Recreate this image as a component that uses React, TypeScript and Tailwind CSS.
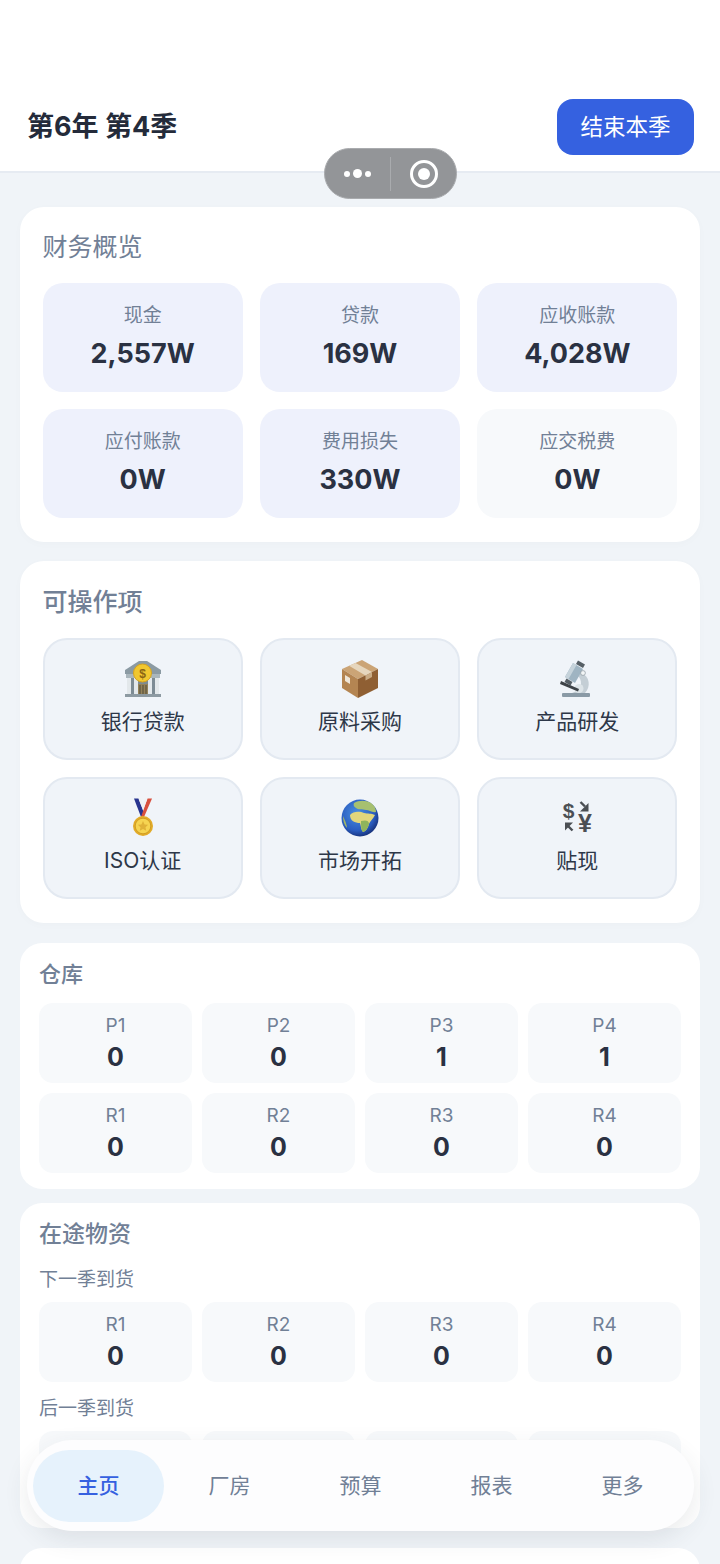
import React from 'react';

const FONT = 'font-["Inter","Noto_Sans_CJK_SC",sans-serif]';

const BankIcon = () => (
  <svg width="40" height="40" viewBox="0 0 40 40">
    <path d="M16 2 L24 2 L38 11 L38 15 L2 15 L2 11 Z" fill="#8b9aa3" />
    <rect x="3" y="15" width="34" height="4" fill="#aab6bc" />
    <rect x="4" y="19" width="4" height="16" fill="#e3e8eb" />
    <rect x="11" y="19" width="4" height="16" fill="#e3e8eb" />
    <rect x="25" y="19" width="4" height="16" fill="#e3e8eb" />
    <rect x="32" y="19" width="4" height="16" fill="#e3e8eb" />
    <rect x="8" y="19" width="3" height="16" fill="#7d8b94" />
    <rect x="15" y="19" width="10" height="16" fill="#7d8b94" />
    <rect x="29" y="19" width="3" height="16" fill="#7d8b94" />
    <rect x="15" y="25" width="10" height="10" fill="#94825a" />
    <path d="M17 26v9M20 26v9M23 26v9" stroke="#4f4a38" strokeWidth="1" />
    <rect x="2" y="35" width="36" height="3" fill="#8d9aa2" />
    <circle cx="19.5" cy="14" r="9" fill="#f1c72f" stroke="#d8a41c" strokeWidth="1" />
    <text x="19.5" y="18.5" textAnchor="middle" fontSize="12" fontWeight="700" fill="#8a6414" fontFamily="Liberation Sans">$</text>
  </svg>
);

const BoxIcon = () => (
  <svg width="40" height="40" viewBox="0 0 40 40">
    <path d="M2 10 L22 1 L38 10 L18 20 Z" fill="#cba476" />
    <path d="M2 10 L18 20 L18 39 L2 29 Z" fill="#b48552" />
    <path d="M18 20 L38 10 L38 29 L18 39 Z" fill="#8f5f33" />
    <path d="M9 6.8 L15.5 4 L32 13 L25.5 16.4 Z" fill="#e6d6bd" />
    <path d="M25.5 16.4 L32 13 L32 18 L25.5 21.4 Z" fill="#c9ab85" />
    <path d="M5 16 L10 19 L10 25 L5 22 Z" fill="#efe6d8" />
  </svg>
);

const MicroscopeIcon = () => (
  <svg width="40" height="40" viewBox="0 0 40 40">
    <rect x="5" y="34" width="28" height="4" rx="1" fill="#8a9aa6" />
    <path d="M24 14 C33 17 34 28 28 34 L15 34 C20 32 24 31 24 25 C24 21 23 19 21 17 Z" fill="#c4ced5" />
    <circle cx="22" cy="29.5" r="4.5" fill="#dde4e8" />
    <path d="M4 22 L22 30 L21 32.5 L3 25 Z" fill="#3e4348" />
    <path d="M16 4 L26 10 L18 24 L8 18 Z" fill="#9fb4c2" />
    <path d="M16 4 L19.5 6 L11.5 20 L8 18 Z" fill="#c6d3db" />
    <path d="M21 1.5 L28 5.5 L26 9 L19 5 Z" fill="#565f66" />
    <path d="M9.5 19.5 L15.5 23 L13.5 26.5 L7.5 23 Z" fill="#565f66" />
    <circle cx="26" cy="14" r="2.4" fill="#f2f5f6" stroke="#7d8a92" strokeWidth="0.6" />
  </svg>
);

const MedalIcon = () => (
  <svg width="40" height="40" viewBox="0 0 40 40">
    <path d="M11 0.5 L15.5 0.5 L21 15 L18 19 Z" fill="#28348f" />
    <path d="M29 0.5 L24.5 0.5 L18 19 L21 19 Z" fill="#d8503f" />
    <path d="M15.5 0.5 L20 12 L24.5 0.5 L22 0.5 L20 6 L18 0.5 Z" fill="#f0f1f4" />
    <circle cx="20" cy="28" r="10" fill="#e2ab28" />
    <circle cx="20" cy="28" r="7.8" fill="#f6d451" stroke="#c99520" strokeWidth="0.8" />
    <path d="M20 23 L21.6 26.4 L25.2 26.8 L22.5 29.2 L23.2 32.8 L20 31 L16.8 32.8 L17.5 29.2 L14.8 26.8 L18.4 26.4 Z" fill="#e0b238" />
  </svg>
);

const GlobeIcon = () => (
  <svg width="40" height="40" viewBox="0 0 40 40">
    <defs>
      <radialGradient id="globeSea" cx="42%" cy="38%" r="68%">
        <stop offset="0%" stopColor="#4a90e0" />
        <stop offset="68%" stopColor="#2a5cc0" />
        <stop offset="100%" stopColor="#12286c" />
      </radialGradient>
    </defs>
    <circle cx="20" cy="20" r="18.5" fill="url(#globeSea)" />
    <path d="M14 5 C19 2 26 2 31 5 C35 8 36 11 36 14 C32 15 29 12 26 12 C22 11 18 12 16 10 C14 9 13 7 14 5 Z" fill="#a6c070" />
    <path d="M10 17 C13 13 20 13 24 15 C28 16 31 15 35 17 C33 21 30 23 29 26 C28 30 26 33 23 34 C21 32 21 28 20 25 C15 25 10 23 10 17 Z" fill="#e2d67c" />
    <path d="M21 23 C25 22 29 22 29 26 C28 30 26 33 23 34 C21 32 21 28 21 23 Z" fill="#8fb45c" />
    <path d="M3 18 C5 22 7 27 7 30 C4 27 3 22 3 18 Z" fill="#a3b766" />
  </svg>
);

const ExchangeIcon = () => (
  <svg width="40" height="40" viewBox="0 0 40 40">
    <text x="11.5" y="20" textAnchor="middle" fontSize="21" fontWeight="700" fill="#4b4f54" fontFamily="Liberation Sans">$</text>
    <text x="28" y="34" textAnchor="middle" fontSize="25" fontWeight="700" fill="#4b4f54" fontFamily="Liberation Sans">¥</text>
    <path d="M23.5 4 L28 8.5" stroke="#4b4f54" strokeWidth="2.4" />
    <path d="M31.5 5 L31.5 13.5 L23 13.5 Z" fill="#4b4f54" />
    <path d="M15.5 32.5 L11 28" stroke="#4b4f54" strokeWidth="2.4" />
    <path d="M8 32.5 L8 24.5 L16 24.5 Z" fill="#4b4f54" />
  </svg>
);

const overview = [
  { label: '现金', value: '2,557W', tint: true },
  { label: '贷款', value: '169W', tint: true },
  { label: '应收账款', value: '4,028W', tint: true },
  { label: '应付账款', value: '0W', tint: true },
  { label: '费用损失', value: '330W', tint: true },
  { label: '应交税费', value: '0W', tint: false },
];

const actions = [
  { label: '银行贷款', icon: <BankIcon /> },
  { label: '原料采购', icon: <BoxIcon /> },
  { label: '产品研发', icon: <MicroscopeIcon /> },
  { label: 'ISO认证', icon: <MedalIcon /> },
  { label: '市场开拓', icon: <GlobeIcon /> },
  { label: '贴现', icon: <ExchangeIcon /> },
];

const StockCell = ({ label, value }: { label: string; value: number }) => (
  <div className="h-[80px] rounded-[14px] bg-[#f7f9fb] flex flex-col items-center pt-[10px]">
    <div className="text-[19px] leading-[26px] text-[#718096]">{label}</div>
    <div className="mt-[1px] text-[25px] leading-[34px] font-bold text-[#2a3142]">{value}</div>
  </div>
);

const StockGrid = ({ items }: { items: [string, number][] }) => (
  <div className="grid grid-cols-4 gap-x-[10px] gap-y-[10px]">
    {items.map(([label, value]) => (
      <StockCell key={label} label={label} value={value} />
    ))}
  </div>
);

const tabs = ['主页', '厂房', '预算', '报表', '更多'];

export default function App() {
  return (
    <div className={`relative h-[1564px] w-[720px] overflow-hidden bg-[#f0f4f8] ${FONT}`}>
      <header className="h-[173px] bg-white border-b-2 border-[#e6ebf2] flex items-end justify-between pl-[27px] pr-[26px] pb-[16px]">
        <h1 className="text-[27px] leading-[40px] font-bold text-[#242b3a] mb-[8px]">第6年 第4季</h1>
        <button className="w-[137px] h-[56px] rounded-[16px] bg-[#3561e0] text-white text-[22.5px]">结束本季</button>
      </header>

      <main className="flex flex-col px-[20px] pt-[34px]">
        <section className="h-[335px] rounded-[24px] bg-white px-[22.5px] pt-[23px] shadow-[0_2px_10px_rgba(0,0,0,0.02)]">
          <h2 className="text-[25px] leading-[34px] font-normal text-[#718096] mb-[19px]">财务概览</h2>
          <div className="grid grid-cols-3 gap-[17px]">
            {overview.map((item) => (
              <div
                key={item.label}
                className={`h-[109px] rounded-[20px] flex flex-col items-center justify-start pt-[19px] ${item.tint ? 'bg-[#eef1fc]' : 'bg-[#f7f9fb]'}`}
              >
                <div className="text-[19px] leading-[28px] text-[#718096]">{item.label}</div>
                <div className="mt-[5px] text-[27px] leading-[38px] font-bold text-[#2a3142]">{item.value}</div>
              </div>
            ))}
          </div>
        </section>

        <section className="mt-[19px] h-[362px] rounded-[24px] bg-white px-[22.5px] pt-[23px] shadow-[0_2px_10px_rgba(0,0,0,0.02)]">
          <h2 className="text-[25px] leading-[36px] font-medium text-[#718096] mb-[18px]">可操作项</h2>
          <div className="grid grid-cols-3 gap-x-[17px] gap-y-[17px]">
            {actions.map((item) => (
              <div
                key={item.label}
                className="h-[122px] rounded-[24px] bg-[#f0f4f9] border-2 border-[#e3e9f1] flex flex-col items-center pt-[19px]"
              >
                <div className="h-[40px] mb-[8px]">{item.icon}</div>
                <div className="text-[21px] leading-[30px] font-normal text-[#2d3748]">{item.label}</div>
              </div>
            ))}
          </div>
        </section>

        <section className="mt-[20px] h-[246px] rounded-[22px] bg-white px-[19px] pt-[15px]">
          <h2 className="text-[22px] leading-[32px] font-medium text-[#718096] mb-[13px]">仓库</h2>
          <StockGrid items={[['P1', 0], ['P2', 0], ['P3', 1], ['P4', 1], ['R1', 0], ['R2', 0], ['R3', 0], ['R4', 0]]} />
        </section>

        <section className="mt-[14px] h-[325px] rounded-[22px] bg-white px-[19px] pt-[15px]">
          <h2 className="text-[23px] leading-[32px] font-medium text-[#718096] mb-[16px]">在途物资</h2>
          <div className="text-[19px] leading-[28px] text-[#718096] mb-[8px]">下一季到货</div>
          <StockGrid items={[['R1', 0], ['R2', 0], ['R3', 0], ['R4', 0]]} />
          <div className="text-[19px] leading-[28px] text-[#718096] mt-[13px] mb-[8px]">后一季到货</div>
          {/* this row sits behind the tab bar, only the tile tops show */}
          <div className="grid grid-cols-4 gap-x-[10px]">
            {[0, 1, 2, 3].map((i) => (
              <div key={i} className="h-[80px] rounded-[14px] bg-[#f7f9fb]" />
            ))}
          </div>
        </section>

        <section className="mt-[20px] h-[200px] rounded-[22px] bg-white" />
      </main>

      {/* host capsule over the page */}
      <div className="absolute left-[324px] top-[148px] w-[133px] h-[51px] rounded-full bg-[#939598] border border-[#a9abae] flex items-center">
        <div className="w-[65px] flex items-center justify-center gap-[3px]">
          <span className="w-[6px] h-[6px] rounded-full bg-white" />
          <span className="w-[9px] h-[9px] rounded-full bg-white" />
          <span className="w-[6px] h-[6px] rounded-full bg-white" />
        </div>
        <div className="w-px h-[34px] bg-[#a9abae]" />
        <div className="flex-1 flex items-center justify-center">
          <span className="w-[28px] h-[28px] rounded-full border-[3px] border-white flex items-center justify-center">
            <span className="w-[12px] h-[12px] rounded-full bg-white" />
          </span>
        </div>
      </div>

      {/* floating tab bar */}
      <nav className="absolute left-[27px] top-[1440px] w-[667px] h-[91px] rounded-[46px] bg-[#fdfdfe] shadow-[0_8px_24px_rgba(45,55,72,0.1)] flex items-center px-[6px]">
        {tabs.map((tab, i) => (
          <div
            key={tab}
            className={`flex-1 h-[72px] rounded-[36px] flex items-center justify-center text-[21px] ${i === 0 ? 'bg-[#e6f2fc] text-[#3561e0] font-medium' : 'text-[#718096] font-normal'}`}
          >
            {tab}
          </div>
        ))}
      </nav>
    </div>
  );
}
